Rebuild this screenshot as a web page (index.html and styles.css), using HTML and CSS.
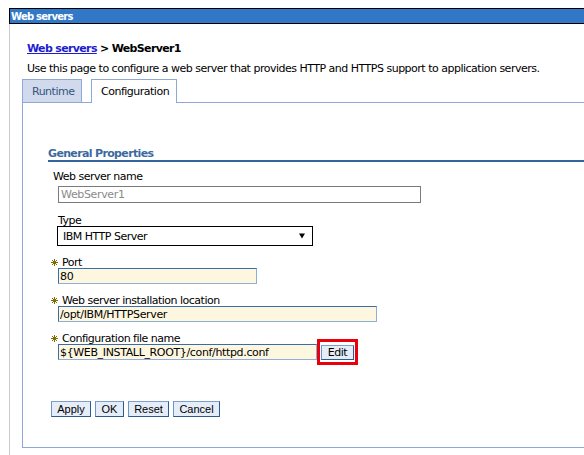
FILE: index.html
```html
<!DOCTYPE html>
<html lang="en">
<head>
<meta charset="utf-8">
<title>Web servers</title>
<link rel="stylesheet" href="styles.css">
</head>
<body>
<div class="page">
  <div class="titlebar">Web servers</div>
  <div class="content">
    <div class="crumb"><a href="#">Web servers</a> &gt; WebServer1</div>
    <p class="desc">Use this page to configure a web server that provides HTTP and HTTPS support to application servers.</p>
    <div class="tabs">
      <div class="tab tab-runtime">Runtime</div>
      <div class="tab tab-config active">Configuration</div>
    </div>
    <div class="panel">
      <h3 class="section">General Properties</h3>

      <div class="field field-name">
        <label class="lbl">Web server name</label>
        <input class="txt txt-disabled w-name" type="text" value="WebServer1" readonly>
      </div>

      <div class="field field-type">
        <label class="lbl">Type</label>
        <div class="select">
          <span>IBM HTTP Server</span>
          <svg class="arrow" width="6" height="6" viewBox="0 0 6 6"><path d="M0 0.5 H6 L3 5.5 Z" fill="#000"/></svg>
        </div>
      </div>

      <div class="field field-req field-port">
        <label class="lbl req"><svg class="star" width="7" height="7" viewBox="0 0 7 7"><path d="M3.5 0 V7 M0 3.5 H7 M1 1 L6 6 M6 1 L1 6" stroke="#7f6d00" stroke-width="1"/></svg>Port</label>
        <input class="txt txt-req w-port" type="text" value="80">
      </div>

      <div class="field field-req field-install">
        <label class="lbl req"><svg class="star" width="7" height="7" viewBox="0 0 7 7"><path d="M3.5 0 V7 M0 3.5 H7 M1 1 L6 6 M6 1 L1 6" stroke="#7f6d00" stroke-width="1"/></svg>Web server installation location</label>
        <input class="txt txt-req w-install" type="text" value="/opt/IBM/HTTPServer">
      </div>

      <div class="field field-req field-config">
        <label class="lbl req"><svg class="star" width="7" height="7" viewBox="0 0 7 7"><path d="M3.5 0 V7 M0 3.5 H7 M1 1 L6 6 M6 1 L1 6" stroke="#7f6d00" stroke-width="1"/></svg>Configuration file name</label>
        <div class="config-row">
          <input class="txt txt-req w-config" type="text" value="${WEB_INSTALL_ROOT}/conf/httpd.conf">
          <div class="edit-wrap"><button class="btn btn-edit" type="button">Edit</button></div>
        </div>
      </div>

      <div class="buttons">
        <button class="btn btn-apply" type="button">Apply</button>
        <button class="btn btn-ok" type="button">OK</button>
        <button class="btn btn-reset" type="button">Reset</button>
        <button class="btn btn-cancel" type="button">Cancel</button>
      </div>
    </div>
  </div>
</div>
</body>
</html>
```

FILE: styles.css
```css
html, body {
  margin: 0;
  padding: 0;
  background: #fff;
  overflow: hidden;
}

body {
  font-family: "DejaVu Sans", Verdana, sans-serif;
  font-size: 11px;
  color: #000;
  letter-spacing: -0.5px;
}

.page {
  box-sizing: border-box;
  min-height: 100vh;
  padding-top: 8px;
  margin-left: 9px;
  display: flex;
  flex-direction: column;
}

.titlebar {
  border: 1px solid #000;
  border-right: none;
  background: #3179c6;
  color: #fff;
  font-weight: bold;
  font-size: 10px;
  letter-spacing: -0.75px;
  line-height: 13px;
  padding: 1px 0 0 1px;
}

.content {
  flex: 1;
  border-left: 1px solid #cbcbcb;
  padding-left: 12px;
}

.crumb {
  margin: 18px 0 0 5px;
  font-weight: bold;
  line-height: 13px;
  letter-spacing: -0.65px;
}

.crumb a {
  color: #1d1dcf;
  text-decoration: underline;
}

.desc {
  margin: 7px 0 0 5px;
  line-height: 13px;
}

.tabs {
  display: flex;
  align-items: flex-end;
  gap: 9px;
  margin-top: 4px;
}

.tab {
  border: 1px solid #8ea9d8;
  border-bottom: none;
  height: 21px;
  padding-top: 1px;
  line-height: 21px;
  padding-left: 9px;
}

.tab-runtime {
  width: 49px;
  background: #d1daec;
  color: #33557f;
}

.tab-config {
  width: 75px;
}

.tab.active {
  background: #fff;
  padding-bottom: 1px;
  margin-bottom: -1px;
  position: relative;
  z-index: 1;
}

.panel {
  border: 1px solid #8ea9d8;
  border-right: none;
  padding: 0 0 30px 25px;
}

.section {
  margin: 44px 0 0;
  font-size: 11px;
  font-weight: bold;
  line-height: 13px;
  color: #3b6aa0;
  letter-spacing: -0.65px;
  border-bottom: 2px solid #34659a;
}

.field {
  display: flex;
  flex-direction: column;
  align-items: flex-start;
}

.lbl {
  display: block;
  line-height: 13px;
  margin-bottom: -1px;
}

.lbl.req {
  display: flex;
  align-items: center;
}

.star {
  margin-right: 4px;
  flex: none;
}

.txt {
  box-sizing: border-box;
  margin: 0;
  font-family: "DejaVu Sans", Verdana, sans-serif;
  font-size: 11px;
  letter-spacing: -0.35px;
  padding: 0 2px;
  outline: none;
}

.txt-disabled {
  height: 17px;
  border: 1px solid #7b7b7b;
  background: #fff;
  color: #8a8a8a;
}

.txt-req {
  height: 16px;
  border: 1px solid;
  border-color: #3a6ca6 #8fb0d6 #8fb0d6 #3a6ca6;
  background: #fef7df;
  color: #000;
  padding-left: 1px;
}

.field-name {
  margin: 8px 0 0 5px;
}

.field-name .txt {
  margin: 4px 0 0 5px;
}

.w-name { width: 363px; }

.field-type {
  margin: 11px 0 0 10px;
}

.select {
  box-sizing: border-box;
  margin-left: -1px;
  width: 256px;
  height: 20px;
  border: 1px solid #000;
  display: flex;
  align-items: center;
  justify-content: space-between;
  padding: 0 7px 0 5px;
}

.field-req {
  margin: 10px 0 0 3px;
}

.field-req .txt,
.config-row {
  margin-left: 7px;
}

.config-row .txt {
  margin-left: 0;
}

.w-port { width: 199px; }
.w-install { width: 319px; }
.w-config { width: 259px; }

.config-row {
  display: flex;
  align-items: flex-start;
}

.edit-wrap {
  position: relative;
  margin-left: 4px;
  margin-top: 1px;
}

.edit-wrap::after {
  content: "";
  position: absolute;
  left: -4px;
  right: -4px;
  top: -6px;
  bottom: -5px;
  border: 3px solid #e8000d;
  pointer-events: none;
}

.btn {
  box-sizing: border-box;
  margin: 0;
  padding: 0;
  height: 16px;
  line-height: 14px;
  border: 1px solid;
  border-color: #7f9fc8 #2e5a8e #2e5a8e #6f93c2;
  background: #e5edf9;
  color: #000;
  font-family: "Liberation Sans", Arial, sans-serif;
  font-size: 11px;
  letter-spacing: 0;
  text-align: center;
  cursor: pointer;
}

.btn-edit {
  display: block;
  width: 33px;
  height: 15px;
  line-height: 13px;
  font-family: "DejaVu Sans", Verdana, sans-serif;
  letter-spacing: -0.5px;
}

.buttons {
  display: flex;
  gap: 4px;
  margin: 41px 0 0 3px;
}

.btn-apply { width: 40px; }
.btn-ok { width: 29px; }
.btn-reset { width: 41px; }
.btn-cancel { width: 47px; }
```
